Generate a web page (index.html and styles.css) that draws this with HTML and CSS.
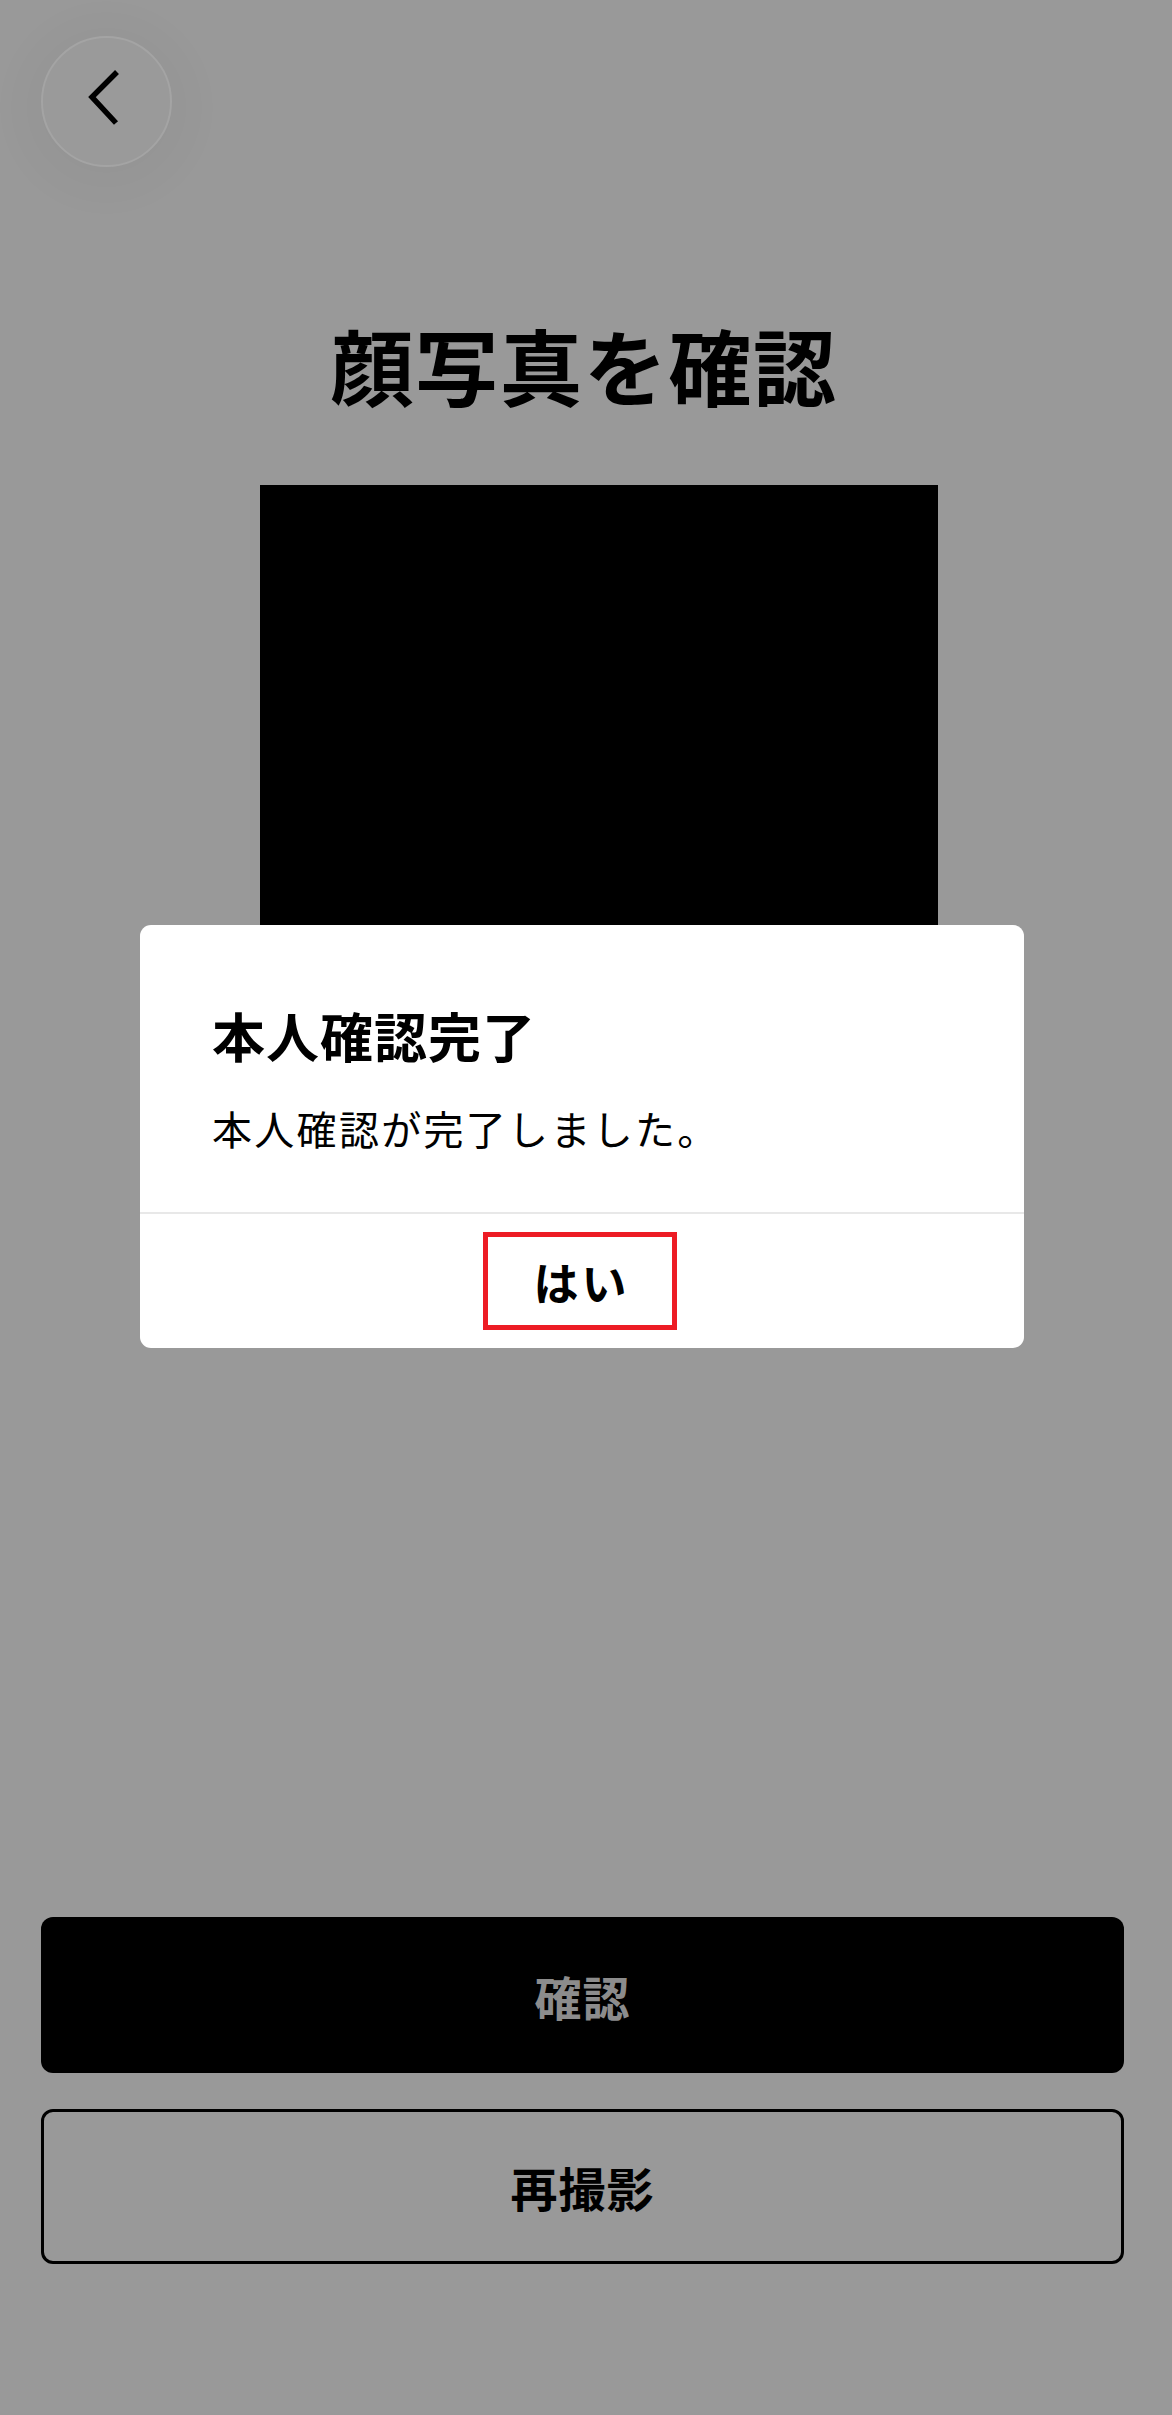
FILE: index.html
```html
<!DOCTYPE html>
<html lang="ja">
<head>
<meta charset="utf-8">
<title>顔写真を確認</title>
<link rel="stylesheet" href="styles.css">
</head>
<body>
<div class="screen">
  <header class="header">
    <button class="back" aria-label="戻る">
      <svg width="131" height="131" viewBox="0 0 131 131">
        <polyline points="76,36 51,61 75,87" fill="none" stroke="#000" stroke-width="5.5" stroke-linecap="butt" stroke-linejoin="miter"/>
      </svg>
    </button>
  </header>
  <h1 class="title">顔写真を確認</h1>
  <div class="photo"></div>
  <div class="actions">
    <button class="btn btn-primary">確認</button>
    <button class="btn btn-outline">再撮影</button>
  </div>

  <div class="dialog" role="dialog">
    <div class="dialog-body">
      <h2 class="dialog-title">本人確認完了</h2>
      <p class="dialog-text">本人確認が完了しました。</p>
    </div>
    <div class="dialog-footer">
      <button class="dialog-ok">はい</button>
    </div>
  </div>
</div>
</body>
</html>
```
FILE: styles.css
```css
* { box-sizing: border-box; }
html, body { margin: 0; padding: 0; }
body {
  font-family: "Noto Sans CJK JP", "Noto Sans", sans-serif;
  background: #999999;
  color: #000;
}
.screen {
  position: relative;
  width: 1172px;
  height: 2415px;
  background: #999999;
  display: flex;
  flex-direction: column;
}
.header {
  padding: 36px 0 0 41px;
  height: 167px;
}
.back {
  width: 131px;
  height: 131px;
  padding: 0;
  border-radius: 50%;
  border: 2px solid #a4a4a4;
  background: #9a9a9a;
  box-shadow: 0 6px 50px 14px rgba(0, 0, 0, 0.035);
  display: flex;
  align-items: center;
  justify-content: center;
}
.back svg { display: block; margin: -2px; }
.title {
  margin: 156px 0 0 0;
  padding-right: 4px;
  text-align: center;
  font-size: 83px;
  line-height: 1;
  font-weight: 700;
  letter-spacing: 1.5px;
}
.photo {
  width: 678px;
  height: 678px;
  margin: 79px 0 0 260px;
  background: #000;
}
.actions {
  margin-top: auto;
  padding: 0 48px 151px 41px;
  display: flex;
  flex-direction: column;
  gap: 36px;
}
.btn {
  height: 156px;
  border-radius: 12px;
  font-family: inherit;
  font-size: 47px;
  font-weight: 700;
  line-height: 1;
  letter-spacing: 1px;
}
.btn-primary {
  background: #000;
  color: #8c8c8c;
  border: none;
}
.btn-outline {
  height: 155px;
  background: transparent;
  color: #000;
  border: 3px solid #000;
}
.dialog {
  position: absolute;
  left: 140px;
  top: 925px;
  width: 884px;
  height: 423px;
  background: #fff;
  border-radius: 11px;
  display: flex;
  flex-direction: column;
}
.dialog-body {
  padding: 84px 72px 0 72px;
  height: 289px;
  border-bottom: 2px solid #e8e8e8;
}
.dialog-title {
  margin: 0;
  font-size: 53px;
  line-height: 1;
  font-weight: 700;
  letter-spacing: 1px;
}
.dialog-text {
  margin: 46px 0 0 0;
  font-size: 40px;
  line-height: 1;
  font-weight: 400;
  letter-spacing: 2.3px;
}
.dialog-footer {
  flex: 1;
  display: flex;
  align-items: center;
  justify-content: center;
  padding-right: 4px;
}
.dialog-ok {
  width: 194px;
  height: 98px;
  border: 5px solid #ed1c24;
  background: #fff;
  font-family: inherit;
  font-size: 45px;
  font-weight: 700;
  line-height: 1;
  letter-spacing: 3px;
  color: #000;
  padding: 0 0 0 3px;
}
```
